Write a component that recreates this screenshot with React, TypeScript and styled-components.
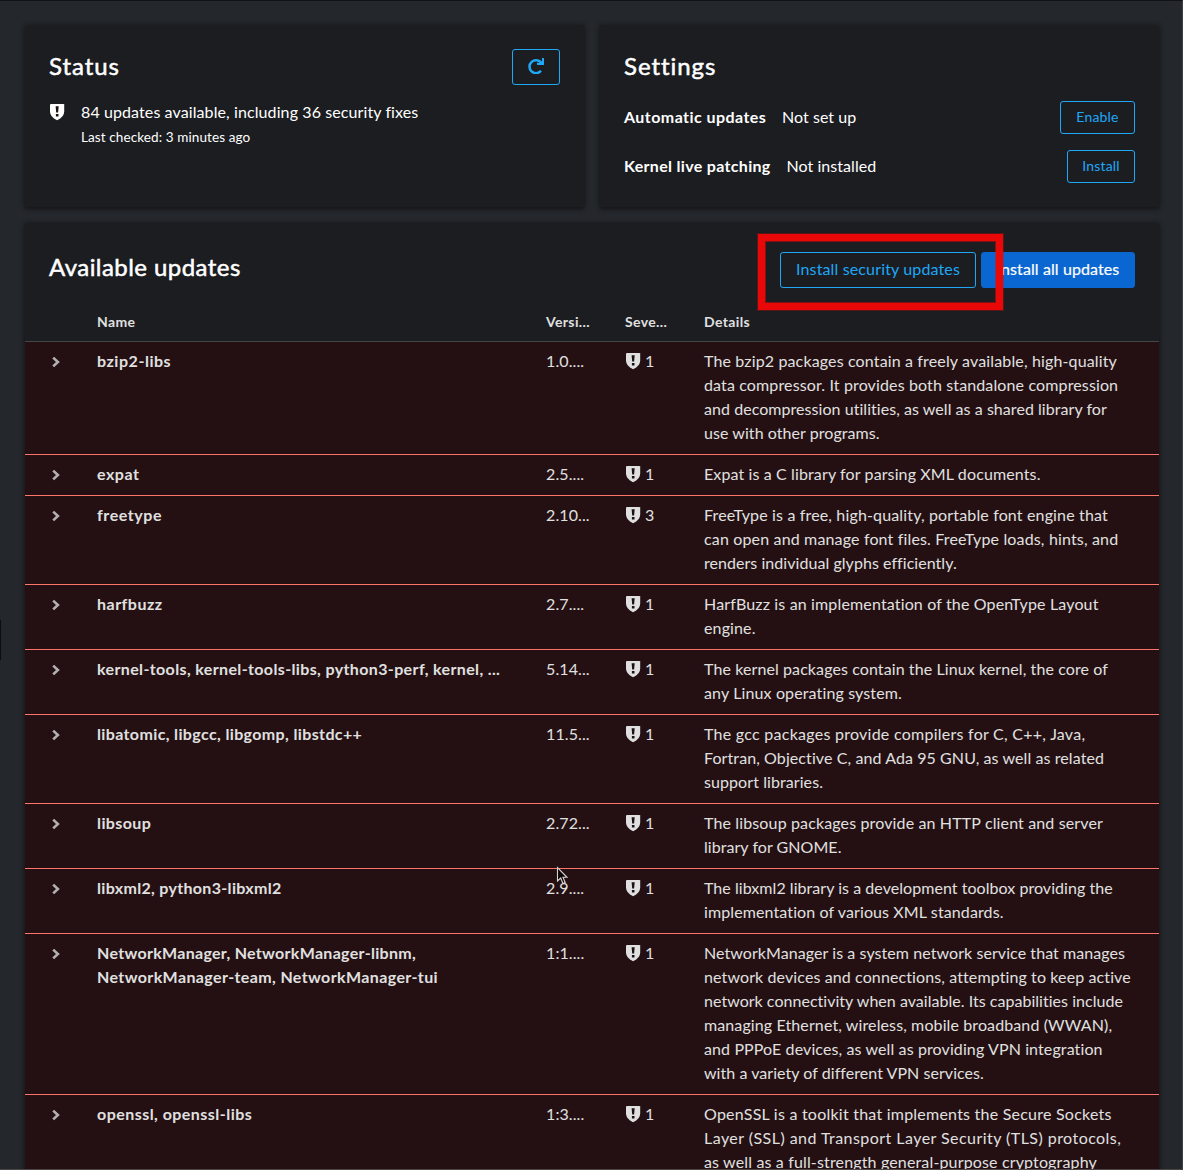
import React from 'react';
import styled, { createGlobalStyle, css } from 'styled-components';

const GlobalStyle = createGlobalStyle`
  * { box-sizing: border-box; }
  body {
    margin: 0;
    background: #24272b;
    color: #fff;
    font: 400 16px/24px Lato, "Liberation Sans", sans-serif;
    letter-spacing: 0.1px;
    overflow: hidden;
  }
`;

const Page = styled.main`
  position: relative;
  height: 1170px;
  overflow: hidden;
  padding: 24px 23px 0 25px;
  border-top: 1px solid #101215;
  border-right: 1px solid #3f4245;
`;

const WindowEdge = styled.div`
  position: absolute;
  left: 0;
  right: -1px;
  bottom: 0;
  height: 1px;
  background: #4b4546;
`;

const Tick = styled.i<{ $x: number }>`
  position: absolute;
  top: -1px;
  left: ${(p) => p.$x}px;
  width: 1px;
  height: 1px;
  background: #4a4c4f;
`;

const EdgeMark = styled.i`
  position: absolute;
  left: 0;
  top: 619px;
  width: 1px;
  height: 40px;
  background: #0c0d0f;
`;

const TopGrid = styled.div`
  display: grid;
  grid-template-columns: 559px 1fr;
  gap: 16px;
  margin-bottom: 16px;
`;

const Card = styled.section`
  background: #1b1d21;
  box-shadow: 0 2px 5px rgba(3, 3, 3, 0.4), 0 0 4px rgba(3, 3, 3, 0.25);
`;

const SummaryCard = styled(Card)`
  height: 182px;
  padding: 24px;
`;

const UpdatesCard = styled(Card)`
  height: 1000px;
`;

const CardHeader = styled.header`
  display: flex;
  justify-content: space-between;
  align-items: center;
  height: 36px;
`;

const UpdatesHeader = styled(CardHeader)`
  height: 90px;
  padding: 4px 24px 0;
`;

const Title = styled.h2<{ $spacing: number; $lift?: number }>`
  margin: 0;
  padding-bottom: ${(p) => p.$lift ?? 4}px;
  font-size: 24px;
  font-weight: 400;
  line-height: 31px;
  letter-spacing: ${(p) => p.$spacing}px;
  -webkit-text-stroke: 0.5px currentColor;
`;

const ButtonRow = styled.div`
  display: flex;
  gap: 5px;
`;

const Button = styled.button<{ $primary?: boolean; $small?: boolean; $width: number }>`
  display: flex;
  align-items: center;
  justify-content: center;
  width: ${(p) => p.$width}px;
  height: 36px;
  padding: 0 0 2px;
  border: 1px solid #1fa7f8;
  border-radius: 3px;
  background: transparent;
  color: #1fa7f8;
  font: inherit;
  letter-spacing: 0.14px;
  white-space: nowrap;
  ${(p) =>
    p.$small &&
    css`
      height: 33px;
      padding-bottom: 1px;
      font-size: 14px;
      letter-spacing: 0.2px;
    `}
  ${(p) =>
    p.$primary &&
    css`
      border-color: #0a66d0;
      background: #0a66d0;
      color: #fff;
      letter-spacing: 0.1px;
      -webkit-text-stroke: 0.2px currentColor;
    `}
`;

const StatusRow = styled.div`
  display: grid;
  grid-template-columns: 32px 1fr;
  margin-top: 15px;
`;

const StatusIcon = styled.span`
  display: flex;
  padding: 4px 0 0 1px;
`;

const LastChecked = styled.div`
  font-size: 13.5px;
  line-height: 20px;
  margin-top: 3px;
`;

const SettingRow = styled.div`
  display: flex;
  align-items: center;
  gap: 16px;
  height: 33px;
  margin-top: 16px;
  > button { margin-left: auto; }
`;

const SettingLabel = styled.strong<{ $width: number; $spacing: number }>`
  width: ${(p) => p.$width}px;
  padding-bottom: 2px;
  letter-spacing: ${(p) => p.$spacing}px;
  white-space: nowrap;
`;

const SettingValue = styled.span`
  padding-bottom: 2px;
  letter-spacing: 0.05px;
`;

const columns = css`
  display: grid;
  grid-template-columns: 72px 449px 79px 79px 1fr;
  color: #e0e0e0;
`;

const HeadRow = styled.div`
  ${columns}
  height: 30px;
  margin-top: -1px;
  border-bottom: 1px solid #444548;
  font-size: 14px;
  font-weight: 700;
  line-height: 20px;
  letter-spacing: 0.36px;
`;

const Row = styled.div`
  ${columns}
  padding: 7px 0 9px;
  background: #241012;
  border-bottom: 1px solid #fe7467;
`;

const Toggle = styled.span`
  display: flex;
  padding: 7px 0 0 27px;
`;

const Name = styled.div<{ $spacing: number }>`
  font-weight: 700;
  letter-spacing: ${(p) => p.$spacing}px;
  white-space: nowrap;
`;

const Severity = styled.div`
  display: flex;
  gap: 4px;
  svg { margin: 4px 0 0 1px; }
`;

const Line = styled.div<{ $spacing: number }>`
  letter-spacing: ${(p) => p.$spacing}px;
  white-space: nowrap;
`;

const Highlight = styled.div`
  position: absolute;
  left: 758px;
  top: 233px;
  width: 245px;
  height: 76px;
  border: 7px solid #e80808;
  box-shadow: inset 0 0 0 1px rgba(232, 8, 8, 0.5), 0 0 0 1px rgba(232, 8, 8, 0.3);
`;

const Pointer = styled.svg`
  position: absolute;
  left: 556px;
  top: 865px;
`;

function ShieldIcon() {
  return (
    <svg width="15" height="17" viewBox="0 0 15 17">
      <path d="M1 0H13.4Q14.2 0 14.2 .6V7.6Q14.2 13.2 7.1 16.2Q0 13.2 0 7.6V.6Q0 0 1 0Z" fill="currentColor" />
      <path d="M5.6 2.2H8.7L8.1 8.6H6.2ZM5.9 10H8.5V12.4H5.9Z" fill="#1b1013" />
    </svg>
  );
}

function RefreshIcon() {
  return (
    <svg width="16" height="16" viewBox="0 0 16 16">
      <path d="M13.1 4.6A6.5 6.5 0 1 0 13 12.8" fill="none" stroke="currentColor" strokeWidth="2.5" />
      <path d="M14 0H16V7H9V4.7H11.6L14 3Z" fill="currentColor" />
    </svg>
  );
}

function ChevronIcon() {
  return (
    <svg width="9" height="12" viewBox="0 0 9 12">
      <path d="M1.2 1.6L5.9 6L1.2 10.4" fill="none" stroke="#b3b0b0" strokeWidth="2.6" />
    </svg>
  );
}

type TextLine = [text: string, spacing: number];

interface Update {
  names: TextLine[];
  version: string;
  count: number;
  details: TextLine[];
}

const updates: Update[] = [
  {
    names: [['bzip2-libs', 0.53]],
    version: '1.0....',
    count: 1,
    details: [
      ['The bzip2 packages contain a freely available, high-quality', 0.14],
      ['data compressor. It provides both standalone compression', 0.13],
      ['and decompression utilities, as well as a shared library for', 0.05],
      ['use with other programs.', 0.06],
    ],
  },
  {
    names: [['expat', 0.53]],
    version: '2.5....',
    count: 1,
    details: [['Expat is a C library for parsing XML documents.', 0.12]],
  },
  {
    names: [['freetype', 0.58]],
    version: '2.10...',
    count: 3,
    details: [
      ['FreeType is a free, high-quality, portable font engine that', 0.15],
      ['can open and manage font files. FreeType loads, hints, and', 0.155],
      ['renders individual glyphs efficiently.', 0.05],
    ],
  },
  {
    names: [['harfbuzz', 0.5]],
    version: '2.7....',
    count: 1,
    details: [
      ['HarfBuzz is an implementation of the OpenType Layout', 0.15],
      ['engine.', 0.13],
    ],
  },
  {
    names: [['kernel-tools, kernel-tools-libs, python3-perf, kernel, ...', 0.37]],
    version: '5.14...',
    count: 1,
    details: [
      ['The kernel packages contain the Linux kernel, the core of', 0.095],
      ['any Linux operating system.', 0.13],
    ],
  },
  {
    names: [['libatomic, libgcc, libgomp, libstdc++', 0.37]],
    version: '11.5...',
    count: 1,
    details: [
      ['The gcc packages provide compilers for C, C++, Java,', 0.26],
      ['Fortran, Objective C, and Ada 95 GNU, as well as related', 0.09],
      ['support libraries.', 0.08],
    ],
  },
  {
    names: [['libsoup', 0.4]],
    version: '2.72...',
    count: 1,
    details: [
      ['The libsoup packages provide an HTTP client and server', 0.135],
      ['library for GNOME.', 0.05],
    ],
  },
  {
    names: [['libxml2, python3-libxml2', 0.32]],
    version: '2.9....',
    count: 1,
    details: [
      ['The libxml2 library is a development toolbox providing the', 0.045],
      ['implementation of various XML standards.', 0.11],
    ],
  },
  {
    names: [
      ['NetworkManager, NetworkManager-libnm,', 0.3],
      ['NetworkManager-team, NetworkManager-tui', 0.385],
    ],
    version: '1:1....',
    count: 1,
    details: [
      ['NetworkManager is a system network service that manages', 0.07],
      ['network devices and connections, attempting to keep active', 0.11],
      ['network connectivity when available. Its capabilities include', 0.03],
      ['managing Ethernet, wireless, mobile broadband (WWAN),', 0.11],
      ['and PPPoE devices, as well as providing VPN integration', 0.11],
      ['with a variety of different VPN services.', 0.05],
    ],
  },
  {
    names: [['openssl, openssl-libs', 0.46]],
    version: '1:3....',
    count: 1,
    details: [
      ['OpenSSL is a toolkit that implements the Secure Sockets', 0.23],
      ['Layer (SSL) and Transport Layer Security (TLS) protocols,', 0.45],
      ['as well as a full-strength general-purpose cryptography', 0.15],
    ],
  },
];

export default function App() {
  return (
    <>
      <GlobalStyle />
      <Page>
        <TopGrid>
          <SummaryCard>
            <CardHeader>
              <Title $spacing={0.95}>Status</Title>
              <Button $width={48} aria-label="Check for updates">
                <RefreshIcon />
              </Button>
            </CardHeader>
            <StatusRow>
              <StatusIcon>
                <ShieldIcon />
              </StatusIcon>
              <div>
                <div>84 updates available, including 36 security fixes</div>
                <LastChecked>Last checked: 3 minutes ago</LastChecked>
              </div>
            </StatusRow>
          </SummaryCard>
          <SummaryCard>
            <CardHeader>
              <Title $spacing={0.95}>Settings</Title>
            </CardHeader>
            <SettingRow>
              <SettingLabel $width={142} $spacing={0.44}>Automatic updates</SettingLabel>
              <SettingValue>Not set up</SettingValue>
              <Button $small $width={75}>Enable</Button>
            </SettingRow>
            <SettingRow>
              <SettingLabel $width={146.5} $spacing={0.32}>Kernel live patching</SettingLabel>
              <SettingValue>Not installed</SettingValue>
              <Button $small $width={68}>Install</Button>
            </SettingRow>
          </SummaryCard>
        </TopGrid>
        <UpdatesCard>
          <UpdatesHeader>
            <Title $spacing={0.44} $lift={7}>Available updates</Title>
            <ButtonRow>
              <Button $width={196}>Install security updates</Button>
              <Button $primary $width={154}>Install all updates</Button>
            </ButtonRow>
          </UpdatesHeader>
          <HeadRow>
            <span />
            <span>Name</span>
            <span>Versi...</span>
            <span>Seve...</span>
            <span>Details</span>
          </HeadRow>
          {updates.map((u) => (
            <Row key={u.names[0][0]}>
              <Toggle>
                <ChevronIcon />
              </Toggle>
              <div>
                {u.names.map(([text, spacing]) => (
                  <Name key={text} $spacing={spacing}>{text}</Name>
                ))}
              </div>
              <span>{u.version}</span>
              <Severity>
                <ShieldIcon />
                {u.count}
              </Severity>
              <div>
                {u.details.map(([text, spacing]) => (
                  <Line key={text} $spacing={spacing}>{text}</Line>
                ))}
              </div>
            </Row>
          ))}
        </UpdatesCard>
        <Highlight />
        <Pointer width="14" height="20" viewBox="0 0 14 20">
          <path d="M1.5 1.5V15L4.7 12L7 17.5L9.2 16.5L7 11.3H11Z" fill="#0c0506" stroke="#d8d4d4" strokeWidth="1.1" />
        </Pointer>
        <Tick $x={846} />
        <Tick $x={991} />
        <Tick $x={1158} />
        <EdgeMark />
        <WindowEdge />
      </Page>
    </>
  );
}
